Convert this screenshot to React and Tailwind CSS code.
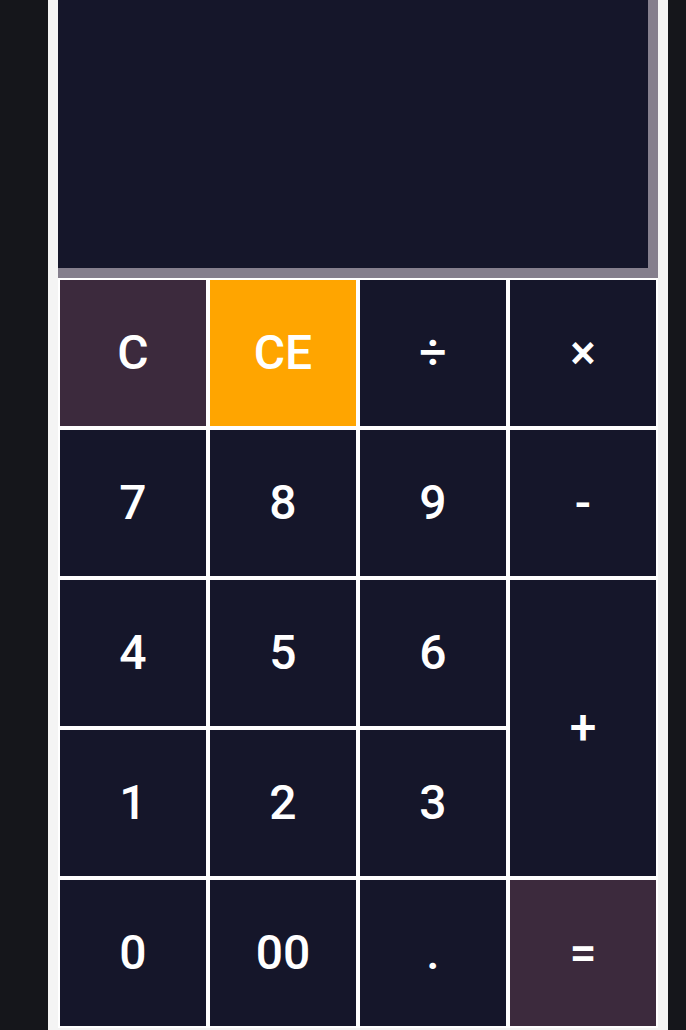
import React from 'react';

const keys = [
    { label: 'C', tone: 'bg-[#3c2a3d]' },
    { label: 'CE', tone: 'bg-[#ffa500]' },
    { label: '÷' },
    { label: '×' },
    { label: '7' },
    { label: '8' },
    { label: '9' },
    { label: '-' },
    { label: '4' },
    { label: '5' },
    { label: '6' },
    { label: '+', span: 'row-span-2' },
    { label: '1' },
    { label: '2' },
    { label: '3' },
    { label: '0' },
    { label: '00' },
    { label: '.' },
    { label: '=', tone: 'bg-[#3c2a3d]' },
];

export default function App() {
    return (
        <div className="flex h-[1030px] w-full overflow-hidden bg-[#15161b] font-['Roboto',sans-serif]">
            <div className="ml-[48px] w-[620px] bg-[#f4f4f4] px-[10px]">
                {/* Display */}
                <div className="h-[278px] border-r-[10px] border-b-[10px] border-[#857f8d] bg-[#15162a]" />

                {/* Keypad */}
                <div className="grid w-[600px] grid-cols-4 auto-rows-[150px]">
                    {keys.map((k, i) => (
                        <button
                            key={i}
                            className={`flex items-center justify-center border-2 border-white text-[48px] font-medium text-white ${k.tone || 'bg-[#15162a]'} ${k.span || ''}`}
                        >
                            {k.label}
                        </button>
                    ))}
                </div>
            </div>
        </div>
    );
}
